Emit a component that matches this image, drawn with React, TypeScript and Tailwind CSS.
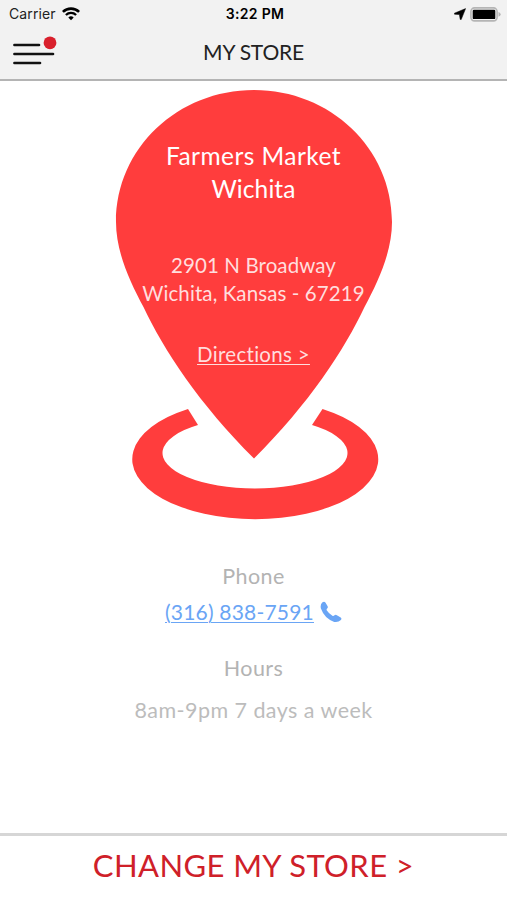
const WifiIcon = () => (
  <svg viewBox="0 0 18 14" className="h-[14px] w-[18px]" fill="none" stroke="#000">
    <path d="M0.9 4.9 A11.6 11.6 0 0 1 17.1 4.9" strokeWidth="2.6" />
    <path d="M3.9 8 A7.3 7.3 0 0 1 14.1 8" strokeWidth="2.3" />
    <path d="M9 13.2 L6.3 10.5 A3.9 3.9 0 0 1 11.7 10.5 Z" fill="#000" stroke="none" />
  </svg>
);

const StatusBar = () => (
  <div className="grid h-[28px] grid-cols-3 items-center pl-[9px] pr-[6px] font-['Inter',sans-serif] leading-none text-[#222]">
    <div className="flex items-center gap-[6px]">
      <span className="text-[14px] tracking-[0.1px]">Carrier</span>
      <WifiIcon />
    </div>
    <span className="text-center text-[14px] font-semibold tracking-[0.35px] text-black">3:22 PM</span>
    <div className="flex items-center justify-end gap-[4px]">
      <svg viewBox="0 0 12 12" className="h-[12px] w-[12px]">
        <path d="M11.6 0.6 L0.4 5.2 L0.5 6.2 L5.4 6.6 L6.2 11.4 L7.2 11.6 Z" fill="#000" stroke="#000" strokeWidth="0.5" />
      </svg>
      <svg viewBox="0 0 31 15" className="h-[15px] w-[31px]">
        <rect x="0.9" y="0.9" width="26.2" height="13" rx="3.6" fill="none" stroke="#b5b5b5" strokeWidth="1.6" />
        <rect x="2.7" y="2.7" width="22.6" height="9.4" rx="1.2" fill="#000" />
        <path d="M28.5 5 Q30.7 6 30.7 7.4 Q30.7 8.8 28.5 9.8 Z" fill="#b5b5b5" />
      </svg>
    </div>
  </div>
);

const Header = () => (
  <header className="h-[81px] border-b-2 border-[#b4b4b4] bg-[#f2f2f2]">
    <StatusBar />
    <div className="grid h-[48px] grid-cols-[60px_1fr_60px] items-center">
      <button className="pl-[12px]" aria-label="Menu">
        <svg viewBox="0 0 46 32" className="h-[32px] w-[46px]">
          <g stroke="#111" strokeWidth="2.6" strokeLinecap="round">
            <path d="M2.4 9 H27" />
            <path d="M2.4 18 H41" />
            <path d="M2.4 27 H28" />
          </g>
          <circle cx="38" cy="6.8" r="6.4" fill="#d9202c" />
        </svg>
      </button>
      <h1 className="pb-[2px] text-center text-[21px] leading-none tracking-[-0.2px] text-[#222]">MY STORE</h1>
    </div>
  </header>
);

const StorePin = () => (
  <section className="grid h-[450px] grid-cols-1 grid-rows-1">
    <svg viewBox="0 81 507 450" className="col-start-1 row-start-1 h-[450px] w-[507px]" fill="#ff3d3d">
      <path d="M254 90 C330 90 392 148 392 222 C392 252 378 282 364.500 307 C345 349 308 405 254 458.500 C200 405 163 349 143.500 307 C130 282 116 252 116 222 C116 148 178 90 254 90 Z" />
      <path d="M188 409 A123 60 0 1 0 322.500 409 L312 425 A92.500 35.500 0 1 1 198 425 Z" />
    </svg>
    <div className="col-start-1 row-start-1 flex flex-col items-center pt-[58px] text-center text-white">
      <h2 className="text-[24.5px] leading-[33px] tracking-[0.45px]">
        Farmers Market
        <br />
        <span className="tracking-[0.1px]">Wichita</span>
      </h2>
      <p className="mt-[46px] text-[20.5px] leading-[28px] tracking-[0.1px] text-[#ffdede]">
        2901 N Broadway
        <br />
        Wichita, Kansas - 67219
      </p>
      <a className="mt-[33px] text-[20.5px] leading-[28px] tracking-[0.3px] text-[#ffdede] underline decoration-1 underline-offset-[2px]">
        Directions &gt;
      </a>
    </div>
  </section>
);

const StoreInfo = () => (
  <section className="flex h-[302px] flex-col items-center pt-[31px] leading-[28px] text-[#b3b3b3]">
    <h3 className="text-[21.5px] tracking-[0.4px]">Phone</h3>
    <div className="mt-[8px] flex items-center gap-[6px] text-[#6aa5f5]">
      <a className="text-[21px] tracking-[0.2px] underline decoration-1 underline-offset-[2px]">(316) 838-7591</a>
      <svg viewBox="0 0 22 22" className="h-[22px] w-[22px]" fill="currentColor">
        <path d="M2.200 1.600 Q4 0 5.400 1.400 L7.500 5 Q8.300 6.600 7.100 7.600 Q6.200 8.500 6.900 9.500 Q9 12.800 12.400 14.800 Q13.500 15.400 14.500 14.300 Q15.400 13.400 16.900 14.200 L20.700 16.500 Q22.100 17.700 20.900 19 Q18 21.800 14.200 20.900 Q4.600 17.800 0.900 7.600 Q0 3.800 2.200 1.600 Z" />
      </svg>
    </div>
    <h3 className="mt-[28px] text-[21.5px] tracking-[0.4px]">Hours</h3>
    <p className="mt-[14px] text-[21.5px] tracking-[0.45px] text-[#bcbcbc]">8am-9pm 7 days a week</p>
  </section>
);

export default function App() {
  return (
    <main className="flex h-[900px] w-[507px] flex-col overflow-hidden bg-white font-['Lato',sans-serif]">
      <Header />
      <StorePin />
      <StoreInfo />
      <button className="h-[67px] border-t-[3px] border-[#d6d6d6] pb-[6px] text-[31px] leading-none tracking-[0.4px] text-[#cf2029]">
        CHANGE MY STORE &gt;
      </button>
    </main>
  );
}
